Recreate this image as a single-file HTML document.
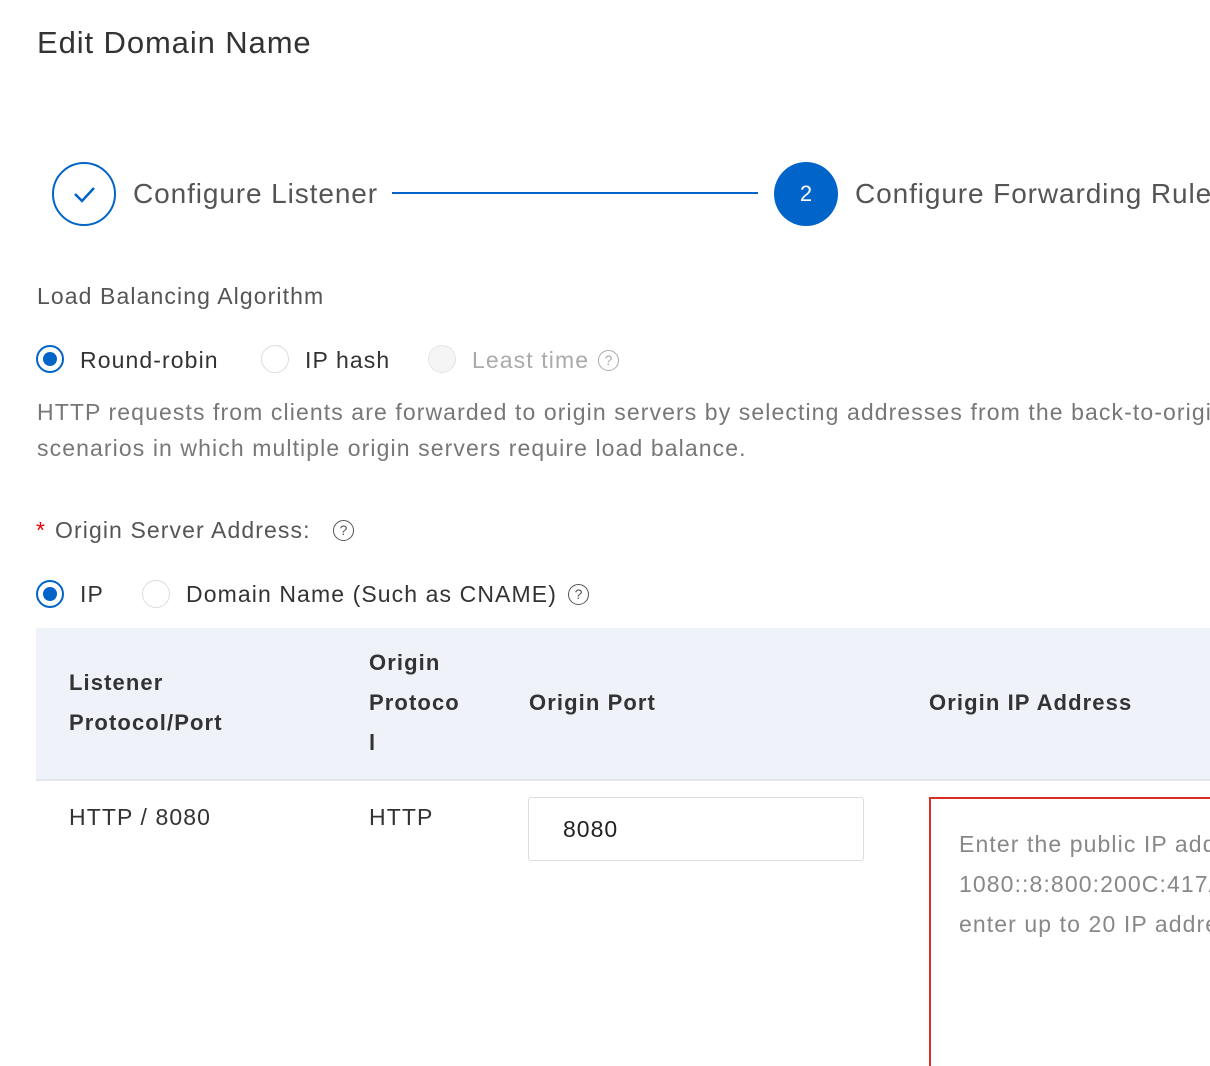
<!DOCTYPE html>
<html><head><meta charset="utf-8"><style>
*{margin:0;padding:0;box-sizing:border-box}
html,body{width:1210px;height:1066px;overflow:hidden}
body{background:#fff;font-family:"Liberation Sans",sans-serif;color:#333;position:relative}
.a{position:absolute;white-space:nowrap}
.r{position:absolute;width:28px;height:28px;border-radius:50%;border:1.5px solid #ddd;background:#fff}
.r.on{border:2px solid #0064c8}
.r.on::after{content:"";position:absolute;left:5px;top:5px;width:14px;height:14px;border-radius:50%;background:#0064c8}
.q{position:absolute;width:21px;height:21px;border-radius:50%;border:1.5px solid #555;font-size:14px;line-height:18px;text-align:center;color:#555}
.t{font-size:23px;line-height:40px;letter-spacing:1.1px}
.th{font-weight:bold;font-size:22px;line-height:40px;color:#333;letter-spacing:1.1px}
</style></head><body>
<div class="a" style="left:37px;top:24px;font-size:31px;line-height:38px;color:#333;letter-spacing:0.9px">Edit Domain Name</div>

<div class="a" style="left:52px;top:162px;width:64px;height:64px;border-radius:50%;border:2px solid #0064c8"></div>
<svg class="a" style="left:52px;top:162px" width="64" height="64"><path d="M23 32 L30 39 L42 26" fill="none" stroke="#0064c8" stroke-width="2.5"/></svg>
<div class="a" style="left:133px;top:176px;font-size:28px;line-height:36px;color:#555;letter-spacing:0.9px">Configure Listener</div>
<div class="a" style="left:392px;top:192px;width:366px;height:2px;background:#0064c8"></div>
<div class="a" style="left:774px;top:162px;width:64px;height:64px;border-radius:50%;background:#0064c8;color:#fff;font-size:22px;line-height:64px;text-align:center">2</div>
<div class="a" style="left:855px;top:176px;font-size:28px;line-height:36px;color:#555;letter-spacing:0.9px">Configure Forwarding Rule</div>

<div class="a t" style="left:37px;top:276px;color:#555">Load Balancing Algorithm</div>

<div class="r on" style="left:36px;top:345px"></div>
<div class="a t" style="left:80px;top:340px">Round-robin</div>
<div class="r" style="left:261px;top:345px"></div>
<div class="a t" style="left:305px;top:340px">IP hash</div>
<div class="r" style="left:428px;top:345px;background:#f5f5f5;border-color:#e5e5e5"></div>
<div class="a t" style="left:472px;top:340px;color:#aaa">Least time</div>
<div class="q" style="left:598px;top:350px;border-color:#aaa;color:#aaa">?</div>

<div class="a" style="left:37px;top:392px;width:1173px;overflow:hidden"><div class="t" style="color:#777;white-space:nowrap">HTTP requests from clients are forwarded to origin servers by selecting addresses from the back-to-origin address list in turn.</div></div>
<div class="a t" style="left:37px;top:428px;color:#777">scenarios in which multiple origin servers require load balance.</div>

<div class="a t" style="left:36px;top:510px;color:#e00">*</div>
<div class="a t" style="left:55px;top:510px;color:#555">Origin Server Address:</div>
<div class="q" style="left:333px;top:520px">?</div>

<div class="r on" style="left:36px;top:580px"></div>
<div class="a t" style="left:80px;top:574px">IP</div>
<div class="r" style="left:142px;top:580px"></div>
<div class="a t" style="left:186px;top:574px">Domain Name (Such as CNAME)</div>
<div class="q" style="left:568px;top:584px">?</div>

<div class="a" style="left:36px;top:628px;width:1174px;height:153px;background:#eff2f9;border-bottom:2px solid #e3e6ec"></div>
<div class="a th" style="left:69px;top:663px">Listener</div>
<div class="a th" style="left:69px;top:703px">Protocol/Port</div>
<div class="a th" style="left:369px;top:643px">Origin</div>
<div class="a th" style="left:369px;top:683px">Protoco</div>
<div class="a th" style="left:369px;top:723px">l</div>
<div class="a th" style="left:529px;top:683px">Origin Port</div>
<div class="a th" style="left:929px;top:683px">Origin IP Address</div>

<div class="a t" style="left:69px;top:797px">HTTP / 8080</div>
<div class="a t" style="left:369px;top:797px">HTTP</div>
<div class="a" style="left:528px;top:797px;width:336px;height:64px;border:1.5px solid #ddd;border-radius:3px;font-size:23px;line-height:62px;padding-left:34px;color:#222;letter-spacing:1px">8080</div>
<div class="a" style="left:929px;top:797px;width:281px;height:269px;border:2px solid #d93026;border-right:none;border-bottom:none;overflow:hidden">
<div class="a t" style="left:28px;top:25px;color:#888">Enter the public IP address</div>
<div class="a t" style="left:28px;top:65px;color:#888">1080::8:800:200C:417A</div>
<div class="a t" style="left:28px;top:105px;color:#888">enter up to 20 IP addresses</div>
</div>
</body></html>
